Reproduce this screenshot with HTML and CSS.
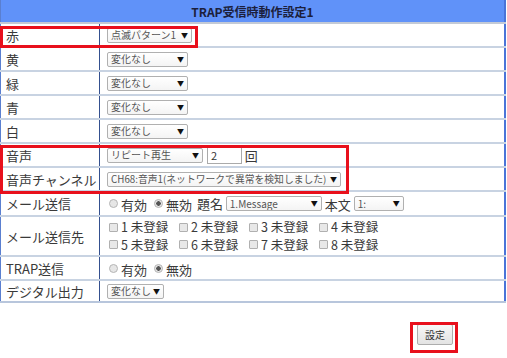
FILE: index.html
```html
<!DOCTYPE html>
<html lang="ja">
<head>
    <meta charset="UTF-8">
    <title>TRAP受信時動作設定1</title>
    <link rel="stylesheet" href="styles.css">
</head>
<body>
    <div class="page">
        <table class="settings">
            <tr class="head-row">
                <th colspan="2">TRAP受信時動作設定1</th>
            </tr>
            <tr>
                <td class="label">赤</td>
                <td><span class="sel w-pattern">点滅パターン1<i>▼</i></span></td>
            </tr>
            <tr>
                <td class="label">黄</td>
                <td><span class="sel w-none">変化なし<i>▼</i></span></td>
            </tr>
            <tr>
                <td class="label">緑</td>
                <td><span class="sel w-none">変化なし<i>▼</i></span></td>
            </tr>
            <tr>
                <td class="label">青</td>
                <td><span class="sel w-none">変化なし<i>▼</i></span></td>
            </tr>
            <tr>
                <td class="label">白</td>
                <td><span class="sel w-none">変化なし<i>▼</i></span></td>
            </tr>
            <tr>
                <td class="label">音声</td>
                <td class="line">
                    <span class="sel w-repeat">リピート再生<i>▼</i></span>
                    <span class="num">2</span>
                    <span class="txt">回</span>
                </td>
            </tr>
            <tr>
                <td class="label">音声チャンネル</td>
                <td><span class="sel w-channel">CH68:音声1(ネットワークで異常を検知しました)<i>▼</i></span></td>
            </tr>
            <tr class="mail-row">
                <td class="label">メール送信</td>
                <td class="line">
                    <span class="radio"></span><span class="txt">有効</span>
                    <span class="radio on"></span><span class="txt">無効</span>
                    <span class="txt gap">題名</span>
                    <span class="sel w-msg">1.Message<i>▼</i></span>
                    <span class="txt">本文</span>
                    <span class="sel w-body">1:<i>▼</i></span>
                </td>
            </tr>
            <tr class="dest-row">
                <td class="label">メール送信先</td>
                <td>
                    <div class="checks">
                        <span class="chk"><b></b>1 未登録</span>
                        <span class="chk"><b></b>2 未登録</span>
                        <span class="chk"><b></b>3 未登録</span>
                        <span class="chk"><b></b>4 未登録</span>
                        <span class="chk"><b></b>5 未登録</span>
                        <span class="chk"><b></b>6 未登録</span>
                        <span class="chk"><b></b>7 未登録</span>
                        <span class="chk"><b></b>8 未登録</span>
                    </div>
                </td>
            </tr>
            <tr>
                <td class="label">TRAP送信</td>
                <td class="line">
                    <span class="radio"></span><span class="txt">有効</span>
                    <span class="radio on"></span><span class="txt">無効</span>
                </td>
            </tr>
            <tr class="last-row">
                <td class="label">デジタル出力</td>
                <td><span class="sel w-digital">変化なし<i>▼</i></span></td>
            </tr>
        </table>

        <div class="actions">
            <button class="btn">設定</button>
        </div>

        <!-- 注釈の赤枠 -->
        <div class="mark mark-red"></div>
        <div class="mark mark-voice"></div>
        <div class="mark mark-btn"></div>
    </div>
</body>
</html>
```

FILE: styles.css
```css
body {
    margin: 0;
    background: #fff;
    font-family: "Noto Sans CJK JP", "Noto Sans", sans-serif;
    color: #3a3a3a;
}

.page {
    position: relative;
    width: 507px;
    height: 358px;
}

.settings {
    width: 506px;
    border-collapse: collapse;
    border-left: 1px solid #5a7fd0;
    border-right: 2px solid #4a74d8;
    font-size: 13px;
}

.head-row th {
    height: 22px;
    padding: 0;
    background: #6092f9;
    color: #1c1f3c;
    font-size: 12px;
    font-weight: bold;
    border-bottom: 2px solid #c3cad6;
}

.settings td {
    height: 22px;
    padding: 0 0 0 7px;
    border-bottom: 2px solid #c8d3e2;
    line-height: 1;
}

.settings td.label {
    width: 93px;
    padding-left: 5px;
    border-right: 1px solid #34508f;
}

.mail-row td { height: 23px; }
.dest-row td { height: 38px; }
.last-row td { height: 20px; border-bottom: 2px solid #b8c6dc; }

.line {
    white-space: nowrap;
}

.sel {
    display: inline-flex;
    align-items: center;
    justify-content: space-between;
    box-sizing: border-box;
    height: 15px;
    padding: 0 3px;
    border: 1px solid #b0b0b0;
    border-radius: 2px;
    background: linear-gradient(#fff, #f4f4f4);
    color: #555;
    font-size: 10px;
    vertical-align: middle;
    white-space: nowrap;
    overflow: hidden;
}

.sel i {
    font-style: normal;
    font-size: 7px;
    color: #111;
    margin-left: 2px;
}

.w-pattern { width: 85px; }
.w-none { width: 81px; }
.w-repeat { width: 96px; }
.w-channel { width: 234px; font-size: 9.8px; }
.w-msg { width: 96px; }
.w-body { width: 50px; }
.w-digital { width: 57px; }

.num {
    display: inline-block;
    box-sizing: border-box;
    width: 35px;
    height: 17px;
    margin-left: 1px;
    padding: 2px 0 0 3px;
    border: 1px solid #aaa;
    font-size: 11px;
    color: #333;
    vertical-align: middle;
}

.txt {
    vertical-align: middle;
}

.gap {
    margin-left: 2px;
}

.radio {
    display: inline-block;
    box-sizing: border-box;
    width: 9px;
    height: 9px;
    margin: 0 3px 0 2px;
    border: 1px solid #b5b5b5;
    border-radius: 50%;
    background: #e6e6e6;
    vertical-align: middle;
}

.radio.on {
    margin-left: 4px;
    background: radial-gradient(circle, #555 0 2px, #e6e6e6 2.5px);
}

.checks {
    display: grid;
    grid-template-columns: repeat(4, 70px);
    row-gap: 5px;
    padding-left: 2px;
    font-size: 12.5px;
}

.chk {
    display: flex;
    align-items: center;
    white-space: nowrap;
}

.chk b {
    display: inline-block;
    box-sizing: border-box;
    width: 9px;
    height: 9px;
    margin-right: 3px;
    border: 1px solid #b0b0b0;
    border-radius: 1px;
    background: #e8e8e8;
}

.actions {
    display: flex;
    justify-content: flex-end;
    padding: 21px 54px 0 0;
}

.btn {
    width: 36px;
    height: 21px;
    padding: 0;
    border: 1px solid #adadad;
    border-radius: 2px;
    background: linear-gradient(#f7f7f7, #e3e3e3);
    color: #333;
    font-family: "Noto Sans CJK JP", sans-serif;
    font-size: 10px;
}

.mark {
    position: absolute;
    border: 3px solid #e8101c;
    box-sizing: border-box;
}

.mark-red {
    left: 0;
    top: 26px;
    width: 198px;
    height: 22px;
}

.mark-voice {
    left: 0;
    top: 145px;
    width: 349px;
    height: 49px;
}

.mark-btn {
    left: 410px;
    top: 322px;
    width: 48px;
    height: 31px;
}
```
